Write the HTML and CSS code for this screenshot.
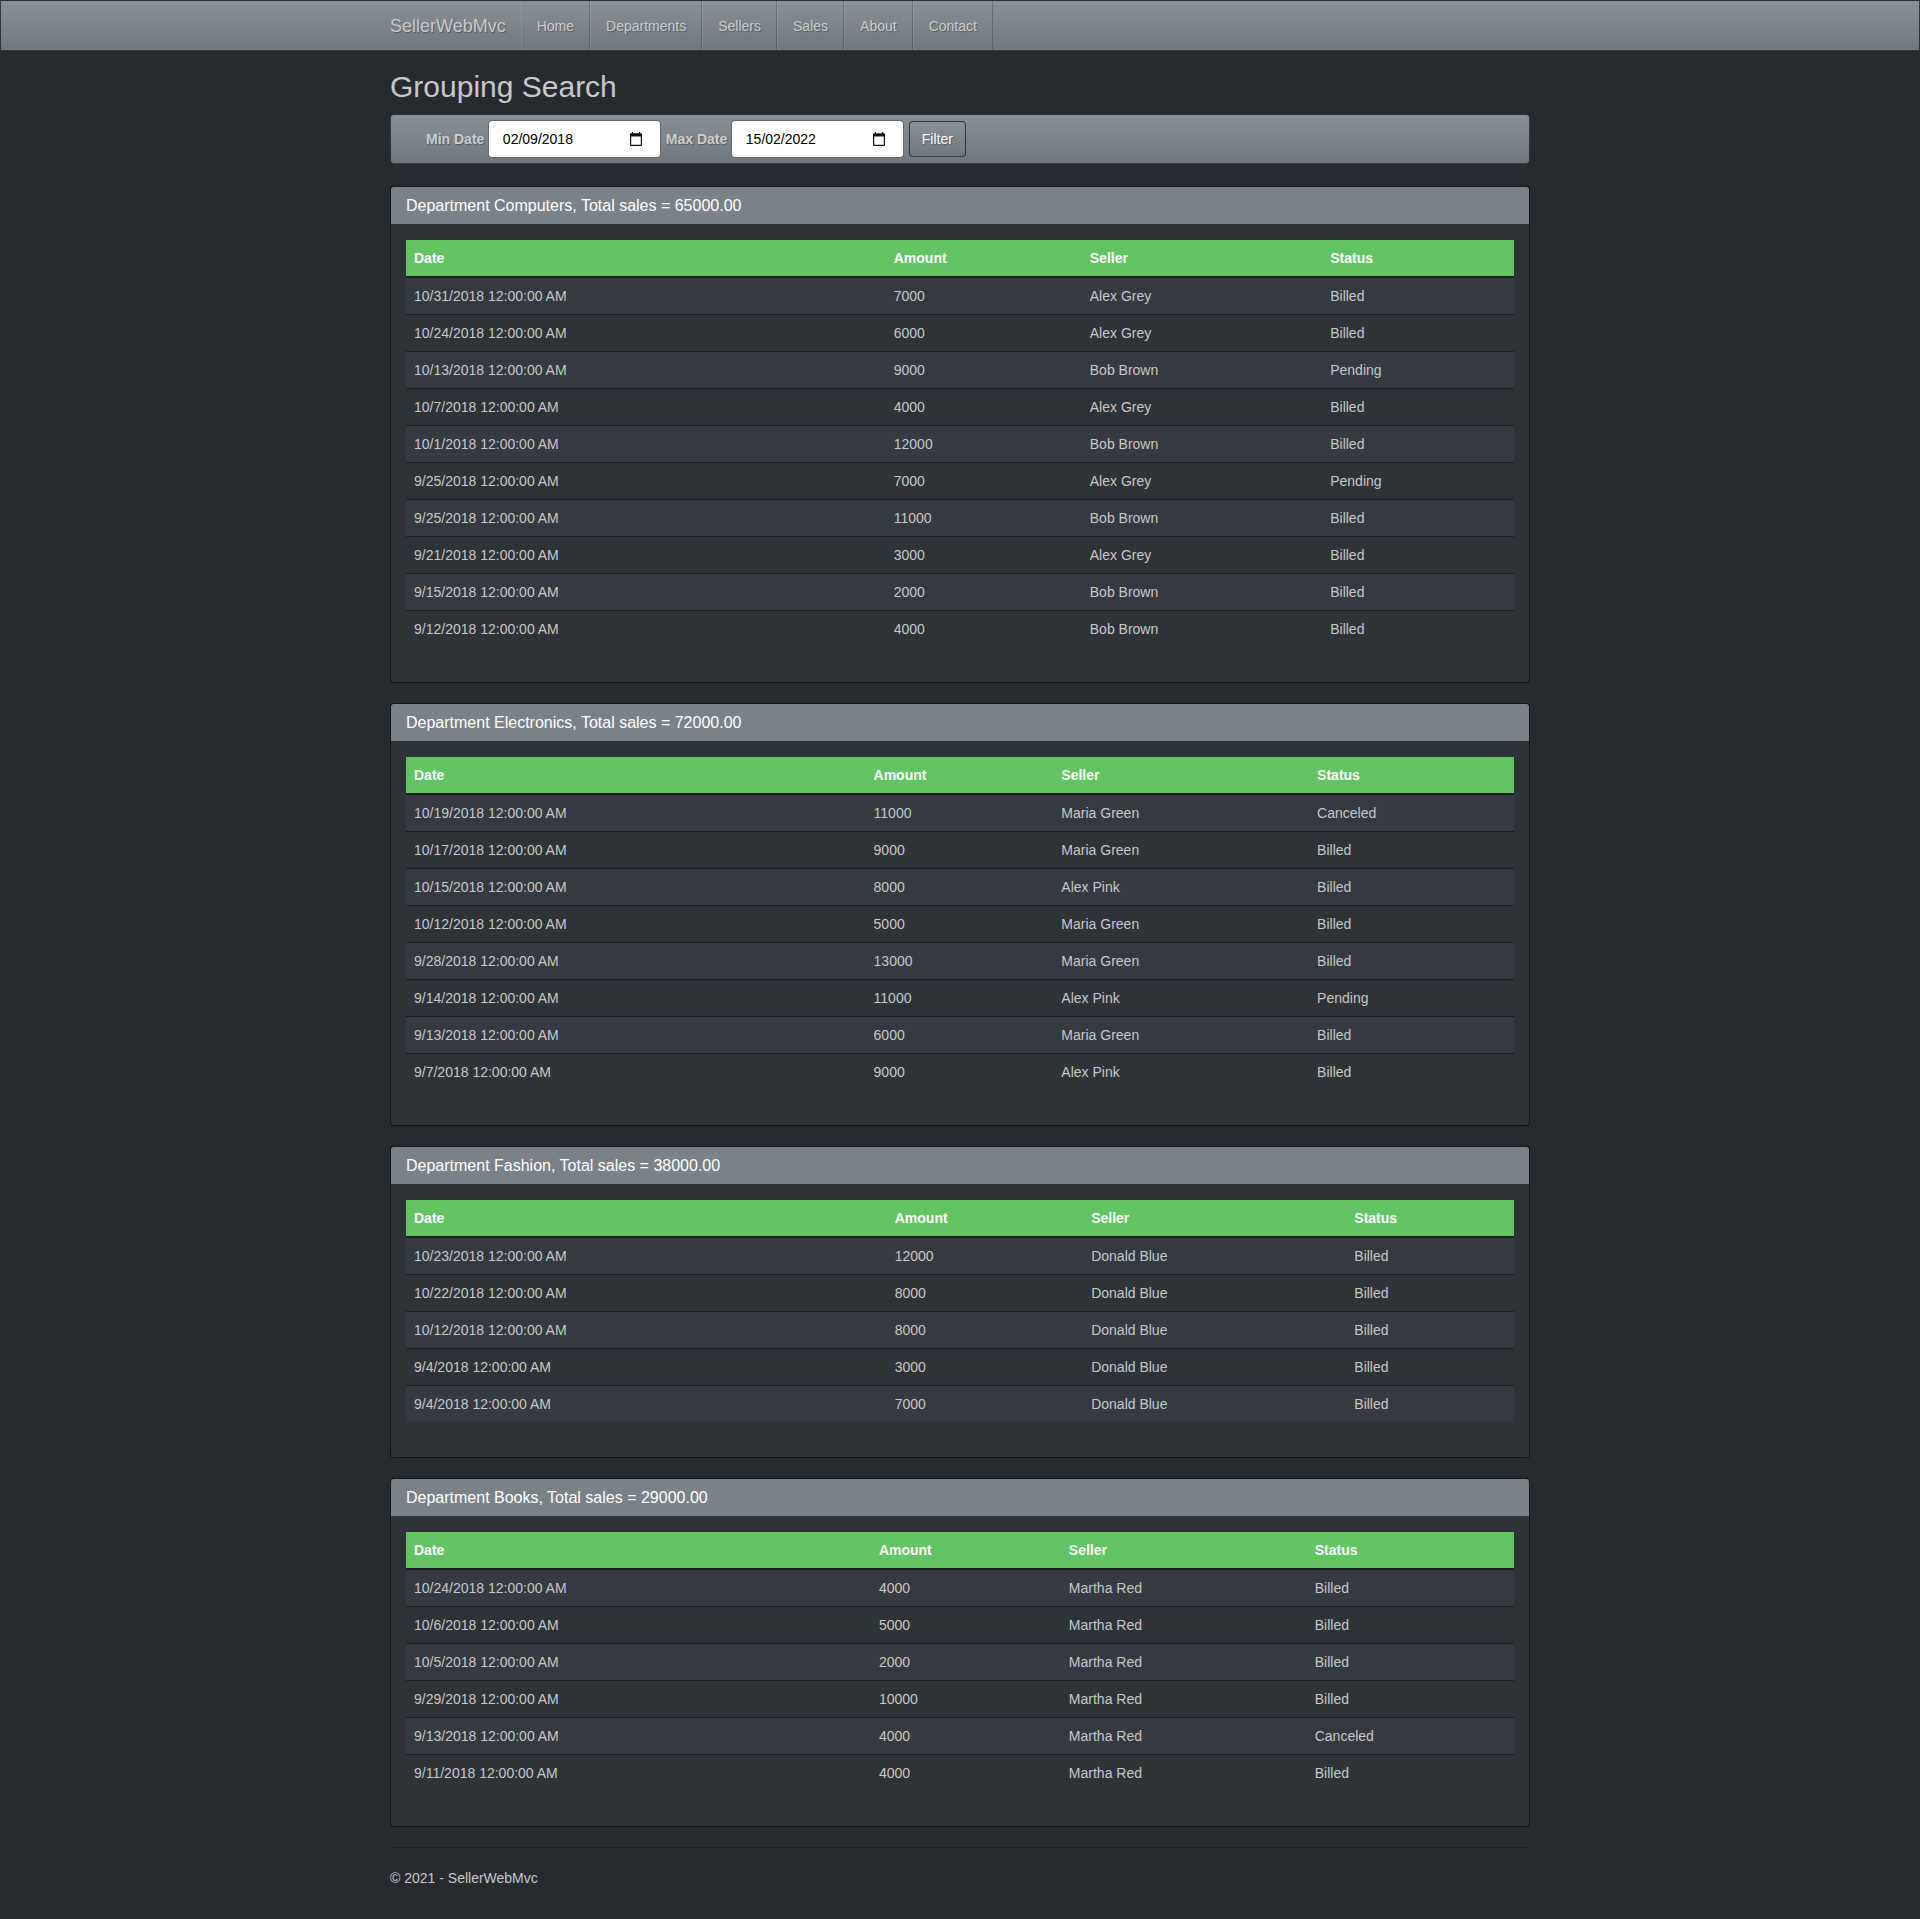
FILE: index.html
```html
<!DOCTYPE html>
<html lang="en">
<head>
<meta charset="utf-8">
<title>Grouping Search - SellerWebMvc</title>
<link rel="stylesheet" href="styles.css">
</head>
<body>
<nav class="topbar">
  <div class="topbar-inner">
    <a class="brand" href="#">SellerWebMvc</a>
    <ul class="nav">
      <li><a href="#">Home</a></li>
      <li><a href="#">Departments</a></li>
      <li><a href="#">Sellers</a></li>
      <li><a href="#">Sales</a></li>
      <li><a href="#">About</a></li>
      <li><a href="#">Contact</a></li>
    </ul>
  </div>
</nav>

<div class="container">
  <h2 class="page-title">Grouping Search</h2>

  <form class="filterbar">
    <label class="filter-label">Min Date</label>
    <span class="date-input"><input type="text" value="02/09/2018" readonly><svg class="cal" viewBox="2 1 20 22" preserveAspectRatio="none"><path d="M20 3h-1V1h-2v2H7V1H5v2H4c-1.1 0-2 .9-2 2v16c0 1.1.9 2 2 2h16c1.1 0 2-.9 2-2V5c0-1.1-.9-2-2-2zm0 18H4V8h16v13z"/></svg></span>
    <label class="filter-label">Max Date</label>
    <span class="date-input"><input type="text" value="15/02/2022" readonly><svg class="cal" viewBox="2 1 20 22" preserveAspectRatio="none"><path d="M20 3h-1V1h-2v2H7V1H5v2H4c-1.1 0-2 .9-2 2v16c0 1.1.9 2 2 2h16c1.1 0 2-.9 2-2V5c0-1.1-.9-2-2-2zm0 18H4V8h16v13z"/></svg></span>
    <button type="button" class="btn">Filter</button>
  </form>

  <div class="panel">
    <div class="panel-heading"><h3 class="panel-title">Department Computers, Total sales = 65000.00</h3></div>
    <div class="panel-body">
      <table class="table">
        <thead><tr><th>Date</th><th>Amount</th><th>Seller</th><th>Status</th></tr></thead>
        <tbody>
          <tr><td>10/31/2018 12:00:00 AM</td><td>7000</td><td>Alex Grey</td><td>Billed</td></tr>
          <tr><td>10/24/2018 12:00:00 AM</td><td>6000</td><td>Alex Grey</td><td>Billed</td></tr>
          <tr><td>10/13/2018 12:00:00 AM</td><td>9000</td><td>Bob Brown</td><td>Pending</td></tr>
          <tr><td>10/7/2018 12:00:00 AM</td><td>4000</td><td>Alex Grey</td><td>Billed</td></tr>
          <tr><td>10/1/2018 12:00:00 AM</td><td>12000</td><td>Bob Brown</td><td>Billed</td></tr>
          <tr><td>9/25/2018 12:00:00 AM</td><td>7000</td><td>Alex Grey</td><td>Pending</td></tr>
          <tr><td>9/25/2018 12:00:00 AM</td><td>11000</td><td>Bob Brown</td><td>Billed</td></tr>
          <tr><td>9/21/2018 12:00:00 AM</td><td>3000</td><td>Alex Grey</td><td>Billed</td></tr>
          <tr><td>9/15/2018 12:00:00 AM</td><td>2000</td><td>Bob Brown</td><td>Billed</td></tr>
          <tr><td>9/12/2018 12:00:00 AM</td><td>4000</td><td>Bob Brown</td><td>Billed</td></tr>
        </tbody>
      </table>
    </div>
  </div>

  <div class="panel">
    <div class="panel-heading"><h3 class="panel-title">Department Electronics, Total sales = 72000.00</h3></div>
    <div class="panel-body">
      <table class="table">
        <thead><tr><th>Date</th><th>Amount</th><th>Seller</th><th>Status</th></tr></thead>
        <tbody>
          <tr><td>10/19/2018 12:00:00 AM</td><td>11000</td><td>Maria Green</td><td>Canceled</td></tr>
          <tr><td>10/17/2018 12:00:00 AM</td><td>9000</td><td>Maria Green</td><td>Billed</td></tr>
          <tr><td>10/15/2018 12:00:00 AM</td><td>8000</td><td>Alex Pink</td><td>Billed</td></tr>
          <tr><td>10/12/2018 12:00:00 AM</td><td>5000</td><td>Maria Green</td><td>Billed</td></tr>
          <tr><td>9/28/2018 12:00:00 AM</td><td>13000</td><td>Maria Green</td><td>Billed</td></tr>
          <tr><td>9/14/2018 12:00:00 AM</td><td>11000</td><td>Alex Pink</td><td>Pending</td></tr>
          <tr><td>9/13/2018 12:00:00 AM</td><td>6000</td><td>Maria Green</td><td>Billed</td></tr>
          <tr><td>9/7/2018 12:00:00 AM</td><td>9000</td><td>Alex Pink</td><td>Billed</td></tr>
        </tbody>
      </table>
    </div>
  </div>

  <div class="panel">
    <div class="panel-heading"><h3 class="panel-title">Department Fashion, Total sales = 38000.00</h3></div>
    <div class="panel-body">
      <table class="table">
        <thead><tr><th>Date</th><th>Amount</th><th>Seller</th><th>Status</th></tr></thead>
        <tbody>
          <tr><td>10/23/2018 12:00:00 AM</td><td>12000</td><td>Donald Blue</td><td>Billed</td></tr>
          <tr><td>10/22/2018 12:00:00 AM</td><td>8000</td><td>Donald Blue</td><td>Billed</td></tr>
          <tr><td>10/12/2018 12:00:00 AM</td><td>8000</td><td>Donald Blue</td><td>Billed</td></tr>
          <tr><td>9/4/2018 12:00:00 AM</td><td>3000</td><td>Donald Blue</td><td>Billed</td></tr>
          <tr><td>9/4/2018 12:00:00 AM</td><td>7000</td><td>Donald Blue</td><td>Billed</td></tr>
        </tbody>
      </table>
    </div>
  </div>

  <div class="panel">
    <div class="panel-heading"><h3 class="panel-title">Department Books, Total sales = 29000.00</h3></div>
    <div class="panel-body">
      <table class="table">
        <thead><tr><th>Date</th><th>Amount</th><th>Seller</th><th>Status</th></tr></thead>
        <tbody>
          <tr><td>10/24/2018 12:00:00 AM</td><td>4000</td><td>Martha Red</td><td>Billed</td></tr>
          <tr><td>10/6/2018 12:00:00 AM</td><td>5000</td><td>Martha Red</td><td>Billed</td></tr>
          <tr><td>10/5/2018 12:00:00 AM</td><td>2000</td><td>Martha Red</td><td>Billed</td></tr>
          <tr><td>9/29/2018 12:00:00 AM</td><td>10000</td><td>Martha Red</td><td>Billed</td></tr>
          <tr><td>9/13/2018 12:00:00 AM</td><td>4000</td><td>Martha Red</td><td>Canceled</td></tr>
          <tr><td>9/11/2018 12:00:00 AM</td><td>4000</td><td>Martha Red</td><td>Billed</td></tr>
        </tbody>
      </table>
    </div>
  </div>

  <hr class="rule">
  <footer class="footer">
    <p>&copy; 2021 - SellerWebMvc</p>
  </footer>
</div>
</body>
</html>
```

FILE: styles.css
```css
* { box-sizing: border-box; }

html, body {
  margin: 0;
  padding: 0;
}

body {
  background: #272b30;
  color: #c8c8c8;
  font-family: "Liberation Sans", Arial, Helvetica, sans-serif;
  font-size: 14px;
  line-height: 20px;
  padding-bottom: 20px;
}

a { text-decoration: none; }

/* Top navigation bar */
.topbar {
  height: 51px;
  border: 1px solid rgba(0, 0, 0, 0.6);
  background-image: linear-gradient(#8a9196, #7a8288 60%, #70787d);
  text-shadow: 1px 1px 1px rgba(0, 0, 0, 0.3);
}

.topbar-inner {
  width: 1140px;
  margin: 0 auto;
  display: flex;
  height: 49px;
}

.brand {
  display: block;
  color: #c8c8c8;
  font-size: 18px;
  line-height: 20px;
  padding: 15px 15px 14px 0;
}

.nav {
  list-style: none;
  margin: 0;
  padding: 0;
  display: flex;
}

.nav li a {
  display: block;
  color: #cccccc;
  font-size: 14px;
  line-height: 20px;
  padding: 15px 15px 14px;
  border-left: 1px solid rgba(255, 255, 255, 0.1);
  border-right: 1px solid rgba(0, 0, 0, 0.2);
}

/* Content */
.container {
  width: 1140px;
  margin: 0 auto;
}

.page-title {
  font-size: 30px;
  font-weight: 500;
  line-height: 33px;
  margin: 19px 0 11px;
  color: #c8c8c8;
}

/* Filter bar */
.filterbar {
  display: flex;
  align-items: center;
  height: 50px;
  padding: 0 0 0 35px;
  margin: 0 0 22px;
  border: 1px solid rgba(0, 0, 0, 0.6);
  border-radius: 4px;
  background-image: linear-gradient(#8a9196, #7a8288 60%, #70787d);
}

.filter-label {
  color: #cccccc;
  font-weight: bold;
  text-shadow: 1px 1px 1px rgba(0, 0, 0, 0.3);
  margin-right: 3.5px;
}

.date-input {
  display: flex;
  align-items: center;
  width: 173.5px;
  height: 38px;
  margin-right: 4.5px;
  background: #ffffff;
  border: 1px solid rgba(0, 0, 0, 0.6);
  border-radius: 4px;
  padding: 0 18px 0 14px;
}

.date-input input {
  flex: 1;
  min-width: 0;
  border: 0;
  outline: 0;
  padding: 0;
  background: transparent;
  color: #000000;
  font-family: "Liberation Sans", Arial, Helvetica, sans-serif;
  font-size: 14px;
}

.cal {
  width: 12px;
  height: 14px;
  fill: #111111;
  flex: none;
}

.btn {
  height: 36px;
  width: 57px;
  padding: 0;
  border: 1px solid rgba(0, 0, 0, 0.6);
  border-radius: 4px;
  background-image: linear-gradient(#8a9196, #7a8288 60%, #70787d);
  color: #ffffff;
  font-family: "Liberation Sans", Arial, Helvetica, sans-serif;
  font-size: 14px;
  text-shadow: 1px 1px 1px rgba(0, 0, 0, 0.3);
}

/* Panels */
.panel {
  background: #2e3338;
  border: 1px solid rgba(0, 0, 0, 0.6);
  border-radius: 4px;
  margin-bottom: 20px;
}

.panel-heading {
  background: #7a8288;
  padding: 10px 15px 9px;
  border-bottom: 1px solid rgba(0, 0, 0, 0.6);
  border-radius: 3px 3px 0 0;
}

.panel-title {
  margin: 0;
  font-size: 16px;
  font-weight: 500;
  line-height: 18px;
  color: #ffffff;
}

.panel-body {
  padding: 15px;
}

/* Tables */
.table {
  width: 100%;
  border-collapse: collapse;
  margin-bottom: 20px;
}

.table th,
.table td {
  text-align: left;
  padding: 8px;
  line-height: 20px;
  vertical-align: top;
}

.table thead th {
  background: #62c462;
  color: #ffffff;
  font-weight: bold;
  border-bottom: 2px solid #1c1e22;
}

.table tbody td {
  border-top: 1px solid #1c1e22;
  color: #c8c8c8;
}

.table tbody tr:nth-child(odd) td {
  background: #353a41;
}

/* Footer */
.rule {
  margin: 20px 0;
  border: 0;
  border-top: 1px solid #1c1e22;
}

.footer p {
  margin: 0 0 10px;
}
```
